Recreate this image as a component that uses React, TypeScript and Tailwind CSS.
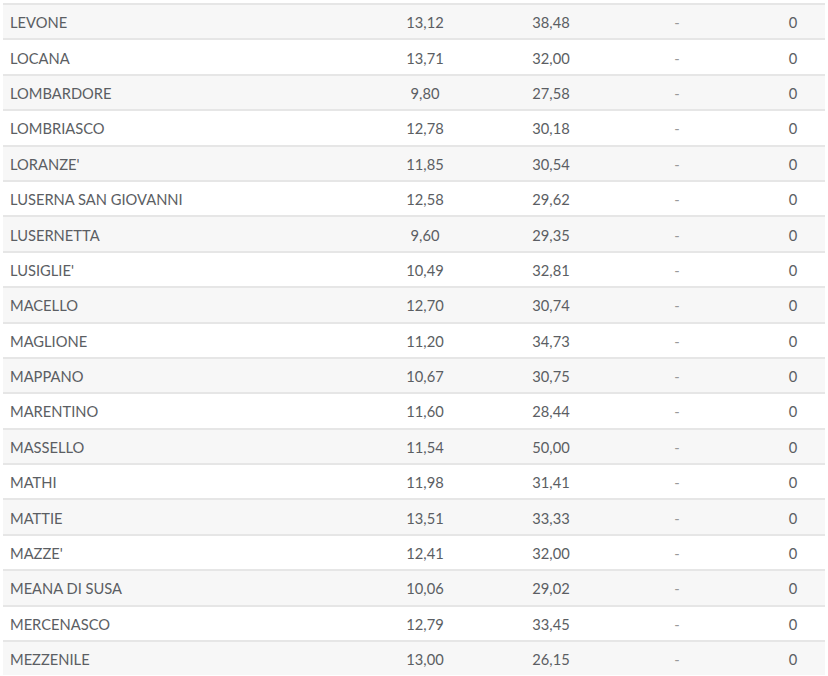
const rows: [string, string, string][] = [
  ['LEVONE', '13,12', '38,48'],
  ['LOCANA', '13,71', '32,00'],
  ['LOMBARDORE', '9,80', '27,58'],
  ['LOMBRIASCO', '12,78', '30,18'],
  ["LORANZE'", '11,85', '30,54'],
  ['LUSERNA SAN GIOVANNI', '12,58', '29,62'],
  ['LUSERNETTA', '9,60', '29,35'],
  ["LUSIGLIE'", '10,49', '32,81'],
  ['MACELLO', '12,70', '30,74'],
  ['MAGLIONE', '11,20', '34,73'],
  ['MAPPANO', '10,67', '30,75'],
  ['MARENTINO', '11,60', '28,44'],
  ['MASSELLO', '11,54', '50,00'],
  ['MATHI', '11,98', '31,41'],
  ['MATTIE', '13,51', '33,33'],
  ["MAZZE'", '12,41', '32,00'],
  ['MEANA DI SUSA', '10,06', '29,02'],
  ['MERCENASCO', '12,79', '33,45'],
  ['MEZZENILE', '13,00', '26,15'],
];

export default function App() {
  return (
    <div className="w-[828px] h-[676px] overflow-hidden bg-white pt-[3px] px-[3px] font-['Lato',sans-serif] text-[14.7px] text-[#5b5e63]">
      {rows.map(([name, a, b], i) => (
        <div
          key={name}
          className={`grid grid-cols-[359px_126px_126px_126px_86px] items-center h-[35.4px] pt-[1px] border-t-2 border-[#e6e6e6] ${
            i % 2 === 0 ? 'bg-[#f7f7f7]' : 'bg-white'
          }`}
        >
          <div className="pl-[7px]">{name}</div>
          <div className="text-center">{a}</div>
          <div className="text-center">{b}</div>
          <div className="text-center text-[#9a9a9a]">-</div>
          <div className="text-center pl-[20px]">0</div>
        </div>
      ))}
    </div>
  );
}
